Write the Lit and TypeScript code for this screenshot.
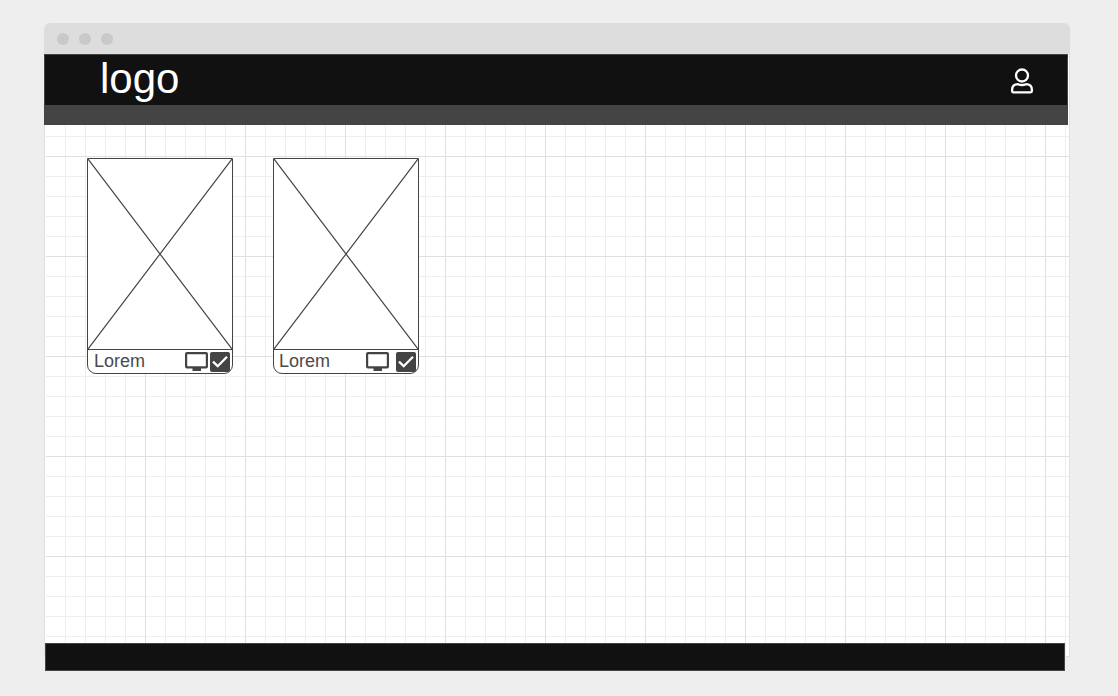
import { LitElement, html, css } from "lit";
import { customElement, property } from "lit/decorators.js";
import { classMap } from "lit/directives/class-map.js";

@customElement("media-card")
class MediaCard extends LitElement {
  @property() name = "";
  @property({ type: Boolean }) roomy = false;

  static styles = css`
    :host {
      display: block;
      width: 146px;
    }
    .card {
      box-sizing: border-box;
      background: #fff;
      border: 1px solid #444;
      border-radius: 0 0 9px 9px;
    }
    .thumb {
      display: block;
      width: 100%;
      height: 190px;
      border-bottom: 1px solid #444;
    }
    .caption {
      display: flex;
      align-items: center;
      height: 23px;
      padding: 0 2px 0 6px;
      gap: 2px;
    }
    .caption.roomy {
      gap: 7px;
      padding-left: 5px;
    }
    .name {
      flex: 1;
      padding-bottom: 2px;
      font-size: 18px;
      line-height: 20px;
      color: #4a4a4a;
    }
    .screen {
      display: block;
      width: 23px;
      height: 19px;
    }
    .check {
      display: grid;
      width: 20px;
      height: 20px;
    }
    .check input,
    .check svg {
      grid-area: 1 / 1;
      width: 20px;
      height: 20px;
      margin: 0;
    }
    .check input {
      appearance: none;
      background: #444;
      border-radius: 2px;
    }
    .check svg {
      pointer-events: none;
    }
    .check input:not(:checked) + svg {
      visibility: hidden;
    }
  `;

  render() {
    return html`
      <article class="card">
        <svg class="thumb" viewBox="0 0 144 190" preserveAspectRatio="none" aria-hidden="true">
          <path d="M0 0L144 190M144 0L0 190" stroke="#444" stroke-width="1.200" fill="none" />
        </svg>
        <div class=${classMap({ caption: true, roomy: this.roomy })}>
          <label class="name" for="selected">${this.name}</label>
          <svg class="screen" viewBox="0 0 23 19" aria-hidden="true">
            <path
              fill="#444"
              fill-rule="evenodd"
              d="M2 0H21Q23 0 23 2V14.500Q23 16.500 21 16.500H16V19H7.500V16.500H2Q0 16.500 0 14.500V2Q0 0 2 0ZM2.200 2.200V14.200H20.800V2.200Z"
            />
          </svg>
          <span class="check">
            <input id="selected" type="checkbox" checked />
            <svg viewBox="0 0 20 20" aria-hidden="true">
              <path d="M3 9.700L7.700 14.200L17 4.800" stroke="#fff" stroke-width="2.300" fill="none" />
            </svg>
          </span>
        </div>
      </article>
    `;
  }
}

@customElement("app-root")
class AppRoot extends LitElement {
  static styles = css`
    :host {
      display: flex;
      flex-direction: column;
      box-sizing: border-box;
      min-height: 100vh;
      padding: 23px 48px 25px 44px;
      background: #eee;
      font-family: "Liberation Sans", Arial, sans-serif;
    }
    .window {
      flex: 1;
      display: flex;
      flex-direction: column;
      border-radius: 6px 6px 0 0;
    }
    .titlebar {
      display: flex;
      align-items: center;
      gap: 10px;
      height: 31px;
      padding: 0 13px;
      background: #ddd;
      border-radius: 6px 6px 0 0;
    }
    .dot {
      width: 12px;
      height: 12px;
      border-radius: 50%;
      background: #c9c9c9;
    }
    .page {
      flex: 1;
      border: 1px solid #e0e0e0;
      border-top: 0;
      background-color: #fff;
      background-image: linear-gradient(90deg, #e0e0e0 1px, transparent 1px),
        linear-gradient(#e0e0e0 1px, transparent 1px),
        linear-gradient(90deg, #eee 1px, transparent 1px),
        linear-gradient(#eee 1px, transparent 1px);
      background-size: 100px 100px, 100px 100px, 20px 20px, 20px 20px;
      background-position: 0 2px;
      box-shadow: inset 1px 0 #fff;
    }
    .header {
      margin: 0 1px 0 -1px;
    }
    .masthead {
      box-sizing: border-box;
      display: flex;
      align-items: center;
      justify-content: space-between;
      height: 51px;
      padding: 0 33px 0 55px;
      background: #111;
      border: 1px solid #444;
      border-bottom: 0;
    }
    .logo {
      padding-bottom: 2px;
      font-size: 42px;
      line-height: 48px;
      color: #fff;
      text-decoration: none;
    }
    .account {
      display: block;
      padding: 2px 0 0;
      border: 0;
      background: none;
      cursor: pointer;
    }
    .account svg {
      display: block;
      width: 24px;
      height: 26px;
    }
    .subbar {
      height: 20px;
      background: #444;
    }
    .cards {
      display: flex;
      flex-wrap: wrap;
      gap: 40px;
      padding: 33px 42px;
    }
    .footer {
      box-sizing: border-box;
      height: 28px;
      margin: -14px 5px 0 1px;
      background: #111;
      border: 1px solid #444;
      z-index: 1;
    }
  `;

  render() {
    return html`
      <div class="window">
        <div class="titlebar">
          <span class="dot"></span><span class="dot"></span><span class="dot"></span>
        </div>
        <div class="page">
          <header class="header">
            <div class="masthead">
              <a class="logo" href="#">logo</a>
              <button class="account" aria-label="Account">
                <svg viewBox="0 0 24 26" fill="none" stroke="#fff" stroke-width="2.300" aria-hidden="true">
                  <circle cx="12" cy="7.500" r="6" />
                  <path
                    d="M8 16.200C10.500 17.200 13.500 17.200 16 16.200C20 16.200 21.900 18.800 21.900 22V23Q21.900 24.300 20.600 24.300H3.400Q2.100 24.300 2.100 23V22C2.100 18.800 4 16.200 8 16.200Z"
                  />
                </svg>
              </button>
            </div>
            <div class="subbar"></div>
          </header>
          <main class="cards">
            <media-card name="Lorem"></media-card>
            <media-card name="Lorem" roomy></media-card>
          </main>
        </div>
      </div>
      <footer class="footer"></footer>
    `;
  }
}
